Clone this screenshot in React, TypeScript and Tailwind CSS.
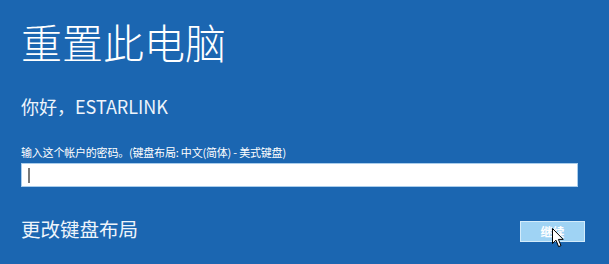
import React from 'react';

const font = { fontFamily: '"Segoe UI", "Noto Sans CJK SC", "Noto Sans", sans-serif' };

function Cursor() {
    return (
        <svg
            className="absolute left-[552px] top-[228px]"
            width="13"
            height="20"
            viewBox="0 0 13 20"
        >
            <path
                d="M0.5 0.5 L0.5 15.5 L4 12.2 L6.6 18.6 L9 17.6 L6.4 11.4 L11.2 11.4 Z"
                fill="#ffffff"
                stroke="#000000"
                strokeWidth="1"
                strokeLinejoin="round"
            />
        </svg>
    );
}

export default function App() {
    return (
        <div className="relative w-[609px] h-[264px] overflow-hidden bg-[#1b66b1] text-white" style={font}>
            <div className="flex flex-col pl-[21px]">
                <h1 className="mt-[21px] text-[41px] leading-[40px] font-light">重置此电脑</h1>
                <p className="mt-[36px] text-[18px] leading-[18px] text-[#eef4fb]">你好，ESTARLINK</p>
                <p className="mt-[31px] text-[11px] leading-[12px] tracking-[-0.2px]">
                    输入这个帐户的密码。(键盘布局: 中文(简体) - 美式键盘)
                </p>
                <div className="mt-[5px] w-[557px] h-[24px] bg-white border border-[#a9cdec] relative">
                    <div className="absolute left-[6px] top-[4px] w-[2px] h-[15px] bg-[#7a7a7a]" />
                </div>
                <div className="mt-[32px] w-[564px] flex justify-between items-start">
                    <span className="text-[19.5px] leading-[19px] text-[#eef4fb]">更改键盘布局</span>
                    <button className="mt-[2px] w-[65px] h-[21px] bg-[#9fd3f4] border border-[#d4ecfb] text-white text-[12px] leading-[12px] font-bold flex items-center justify-center">
                        继续
                    </button>
                </div>
            </div>
            <Cursor />
        </div>
    );
}
